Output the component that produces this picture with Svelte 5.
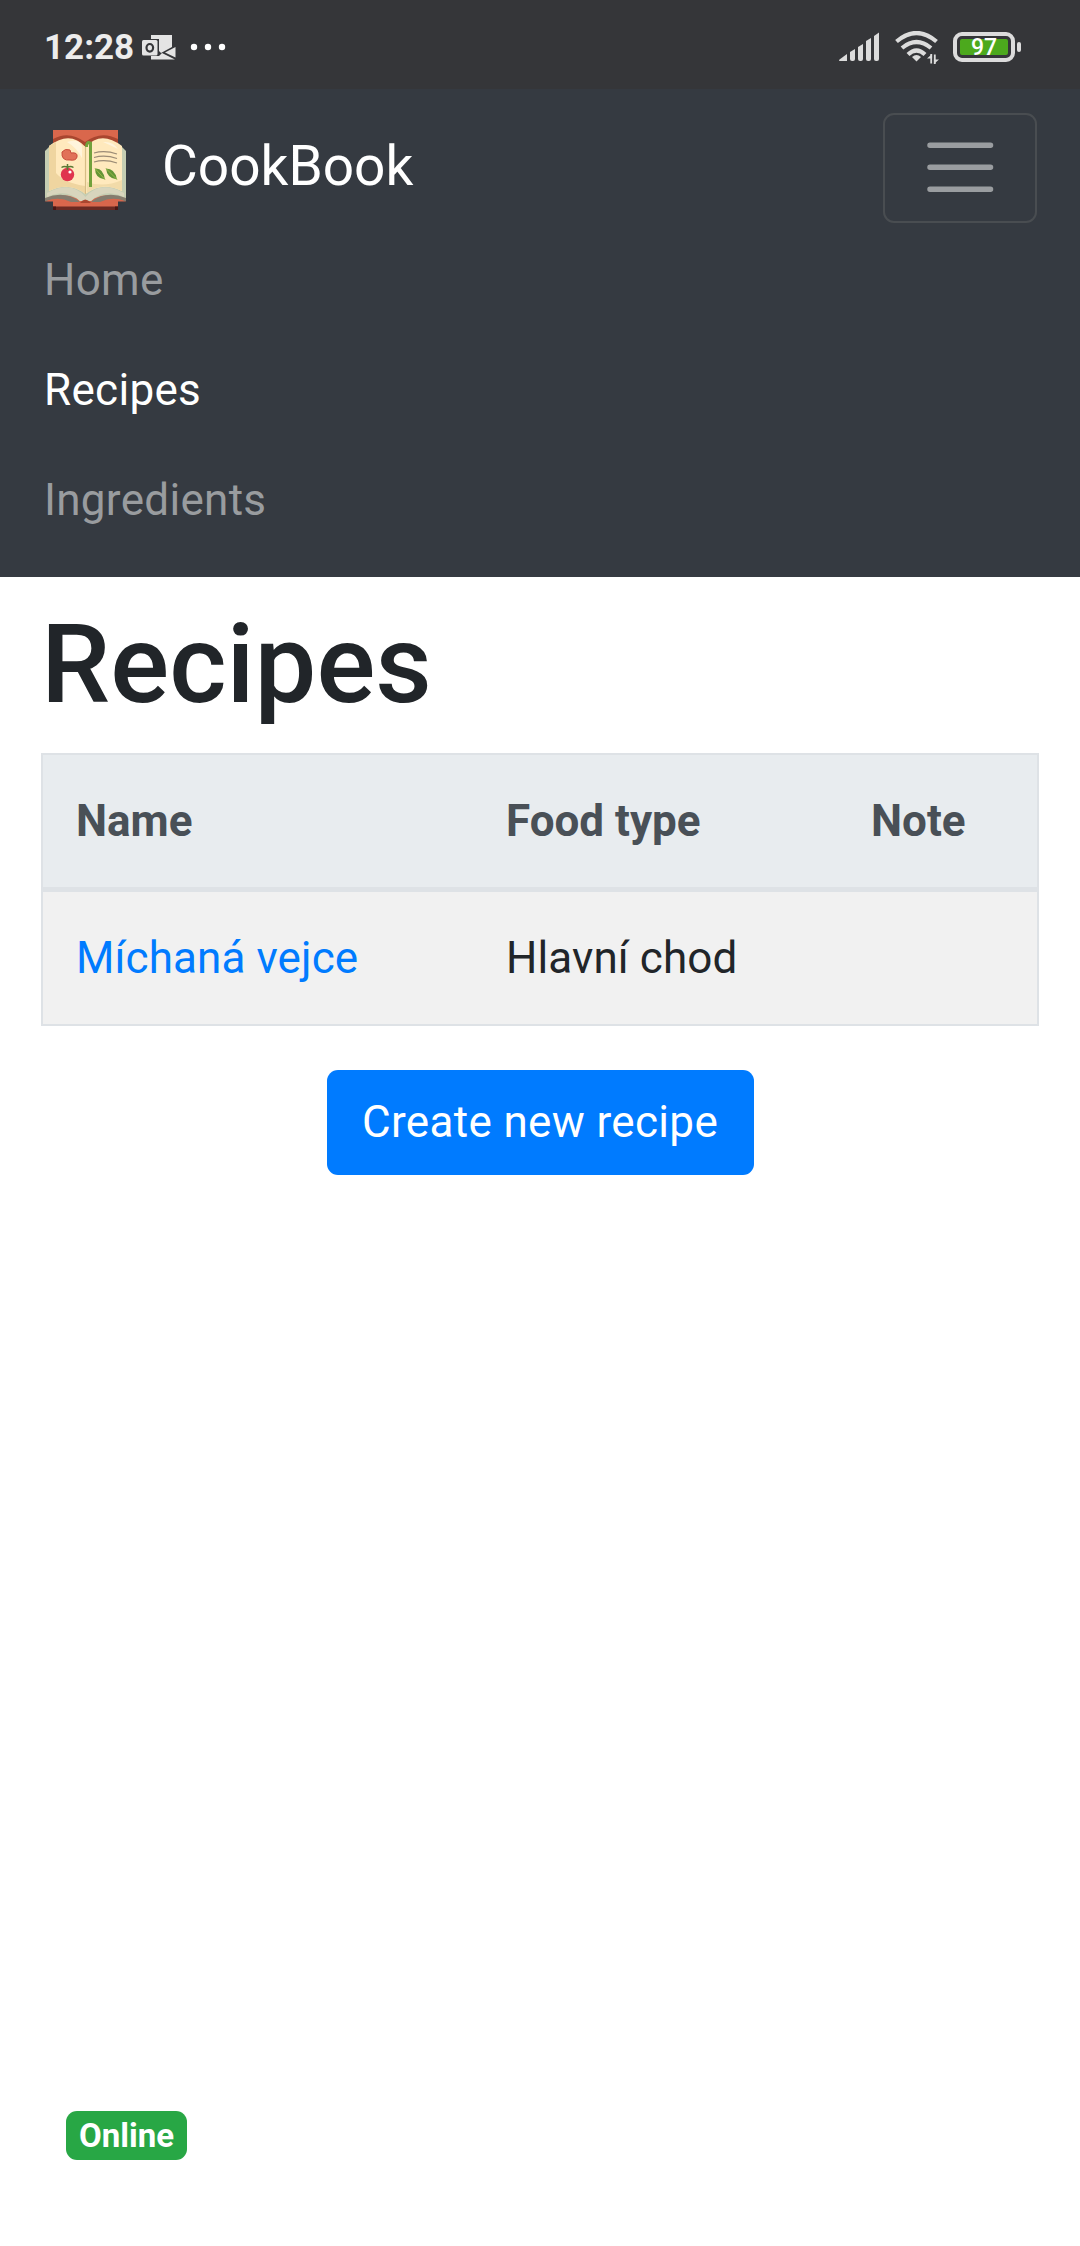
<script>
  const links = [
    { label: 'Home', active: false },
    { label: 'Recipes', active: true },
    { label: 'Ingredients', active: false }
  ];
  const recipes = [{ name: 'Míchaná vejce', type: 'Hlavní chod', note: '' }];
</script>

<div class="screen">
  <div class="status">
    <div class="side">
      <span class="time">12:28</span>
      <svg class="mail" width="34" height="27" viewBox="0 0 34 27">
        <path d="M9 1h21v12l-11 6-2-2V5H9z" fill="#e4e4e4" />
        <path d="M9 22h8l3-3 13 6.500H9z" fill="#e4e4e4" />
        <path d="M33.500 13v10.500L23 18.500z" fill="#e4e4e4" />
        <rect x="0" y="6" width="15.500" height="15.500" rx="1.500" fill="#e4e4e4" />
        <ellipse cx="7.800" cy="13.800" rx="3.300" ry="3.800" fill="none" stroke="#353639" stroke-width="2.200" />
      </svg>
      <svg class="dots" width="36" height="8" viewBox="0 0 36 8" fill="#fff">
        <circle cx="4" cy="4" r="3.200" /><circle cx="18" cy="4" r="3.200" /><circle cx="32" cy="4" r="3.200" />
      </svg>
    </div>
    <div class="side">
      <svg width="42" height="30" viewBox="0 0 42 30" fill="#dcdcdc">
        <path d="M1 29q-1.500 0-.5-1.500L8 22v7z" />
        <path d="M11 20l5-3v10q0 2-2 2h-1q-2 0-2-2z" />
        <path d="M19 15l5-3v15q0 2-2 2h-1q-2 0-2-2z" />
        <path d="M27 9l5-3v21q0 2-2 2h-1q-2 0-2-2z" />
        <path d="M35 4l5-3.500V27q0 2-2 2h-1q-2 0-2-2z" />
      </svg>
      <svg class="wifi" width="44" height="34" viewBox="0 0 44 34">
        <g fill="none" stroke="#dcdcdc" stroke-width="4.200">
          <path d="M1.500 10.500Q21.500-6.500 41.500 10.500" />
          <path d="M7 17Q21.500 5 36 17" />
          <path d="M13 23.500Q21.500 15.500 30 23.500" />
        </g>
        <path d="M17 26q4.500-4 9 0l-4.500 4.500z" fill="#dcdcdc" />
        <path d="M36.200 23v9.500M39.800 33v-9.500" stroke="#dcdcdc" stroke-width="1.800" />
        <path d="M32 27.500h5.100v-4.500zM44 28.500h-5.100v4.500z" fill="#dcdcdc" />
      </svg>
      <div class="battery"><div class="charge">97</div></div>
    </div>
  </div>

  <nav>
    <div class="bar">
      <div class="brand">
        <svg width="82" height="82" viewBox="0 0 82 82">
          <path d="M8 0h65v80H8z" fill="#d9674c" />
          <path d="M8 9Q24 0 40 12Q56 0 73 9v9H8z" fill="#a9462f" />
          <path d="M8 76.500h65v3.500H8z" fill="#6b2a22" />
          <path d="M8 76.500h3v3.500H8zM70 76.500h3v3.500h-3z" fill="#4a1613" />
          <path d="M0 21l5-5h71l5 5v50H0z" fill="#c5cdb2" />
          <path d="M0 71Q22 60 35 71v2H26zM81 71Q59 60 46 71v2h9z" fill="#d9674c" />
          <path d="M0 68Q20 60 35 72H26Q13 66 0 71.500zM81 68Q61 60 46 72h9Q68 66 81 71.500z" fill="#857c6e" />
          <path d="M0 71.500Q13 66 26 72.500H0zM81 71.500Q68 66 55 72.500H81z" fill="#d9674c" />
          <path d="M0 71.500h8v2H0zM73 71.500h8v2h-8z" fill="#353a41" />
          <path d="M2 63Q26 50 40.500 67Q55 50 79 63v4Q59 58 46 71H35Q22 58 2 67z" fill="#d8d5bd" />
          <path d="M4 16Q25 0 40.500 17V64Q24 51 4 61z" fill="#ffe9bd" />
          <path d="M40.500 17Q56 0 77 16V61Q57 51 40.500 64z" fill="#ffe9bd" />
          <path d="M4 16l7-4v31q8 10 29.500 13v8Q24 51 4 61z" fill="#efd5a0" />
          <path d="M42 52q17 6 35-2v11Q57 51 42 63z" fill="#f2dba9" />
          <path d="M22 12q12-4 15 4v12Q31 17 22 12zM58 12q10-1 15 7-8-4-15-7z" fill="#fff4dc" />
          <path d="M17 22q3-4 8-2l1 3q7-1 6 4-1 4-7 3-9 1-8-8z" fill="#e17158" stroke="#c84d3c" stroke-width="1" />
          <circle cx="22.500" cy="44.500" r="6.700" fill="#e0344e" />
          <circle cx="25" cy="42" r="1.600" fill="#fff" />
          <path d="M16.500 37.500q3-2 6 0 3-2 6 0M22.500 40v-6" fill="none" stroke="#5b7935" stroke-width="1.500" />
          <g fill="none" stroke="#9b8b75" stroke-width="1.200">
            <path d="M49 23q11-3 23 1M49 27.500q11-3 23 1M49 32q11-3 23 1" />
          </g>
          <path d="M50 38.500q8-1 10 11-10-1-10-11zM61 38.500q9 0 11 11-10-1-11-11z" fill="#649536" />
          <path d="M50 38.500l10 11M61 38.500l11 11" stroke="#97b947" />
          <path d="M40.500 16V64" stroke="#d6bd86" stroke-width="1.200" />
          <path d="M41.500 17q0-6 4-4V57" fill="none" stroke="#72a13c" stroke-width="3" />
          <path d="M35 73q5-7 11 0z" fill="#a9462f" />
        </svg>
        <span>CookBook</span>
      </div>
      <button class="toggler" aria-label="Toggle navigation">
        <svg width="82.500" height="82.500" viewBox="0 0 30 30">
          <path d="M4 7h22M4 15h22M4 23h22" stroke="#9a9da0" stroke-width="2" stroke-linecap="round" />
        </svg>
      </button>
    </div>
    <ul>
      {#each links as link}
        <li class:active={link.active}>{link.label}</li>
      {/each}
    </ul>
  </nav>

  <main>
    <h1>Recipes</h1>
    <table>
      <thead>
        <tr><th class="name">Name</th><th class="type">Food type</th><th>Note</th></tr>
      </thead>
      <tbody>
        {#each recipes as recipe}
          <tr><td class="link">{recipe.name}</td><td>{recipe.type}</td><td>{recipe.note}</td></tr>
        {/each}
      </tbody>
    </table>
    <button class="create">Create new recipe</button>
  </main>

  <footer><span class="badge">Online</span></footer>
</div>

<style>
  :global(body) { margin: 0; background: #fff; }
  .screen {
    display: flex;
    flex-direction: column;
    box-sizing: border-box;
    width: 1080px;
    height: 2246px;
    font: 400 44px/66px Roboto, sans-serif;
    color: #212529;
    background: #fff;
  }
  svg { display: block; flex: none; }
  button { font: inherit; margin: 0; box-sizing: border-box; }
  .status {
    display: flex;
    justify-content: space-between;
    align-items: center;
    box-sizing: border-box;
    height: 89px;
    padding: 5px 59px 0 44px;
    background: #353639;
  }
  .side { display: flex; align-items: center; }
  .time { width: 98px; font-size: 35px; line-height: 40px; font-weight: 700; color: #ececec; padding-top: 1px; }
  .dots { margin-left: 14px; }
  .wifi { margin: 2px 14px 0 14px; }
  .battery {
    position: relative;
    box-sizing: border-box;
    width: 62px;
    height: 30px;
    margin-right: 6px;
    padding: 3px;
    border: 4px solid #dcdcdc;
    border-radius: 9px;
  }
  .battery::after {
    content: '';
    position: absolute;
    right: -10px;
    top: 6px;
    width: 4px;
    height: 10px;
    border-radius: 2px;
    background: #dcdcdc;
  }
  .charge {
    height: 16px;
    border-radius: 2px;
    background: #4ca91d;
    color: #fff;
    font: 500 23px/18px Roboto, sans-serif;
    text-align: center;
  }
  nav {
    box-sizing: border-box;
    height: 488px;
    padding: 24px 43px 0 44px;
    background: #353a41;
  }
  .bar { display: flex; justify-content: space-between; align-items: center; height: 110px; }
  .brand { display: flex; align-items: center; gap: 35px; padding-left: 1px; color: #fff; font-size: 55px; }
  .brand span { margin-top: -4px; }
  .brand svg { margin-top: 6px; }
  .toggler {
    display: flex;
    align-items: center;
    justify-content: center;
    width: 154px;
    height: 110px;
    padding: 0 0 1px;
    border: 2px solid #494d51;
    border-radius: 11px;
    background: none;
  }
  ul { list-style: none; margin: 0; padding: 2px 0 0; }
  li { padding: 22px 0; color: #999c9f; letter-spacing: .3px; }
  li.active { color: #fff; }
  main { display: flex; flex-direction: column; align-items: center; padding: 0 41px; }
  h1 {
    align-self: stretch;
    margin: 22px 0;
    font-size: 110px;
    line-height: 132px;
    font-weight: 500;
  }
  table {
    width: 998px;
    box-sizing: border-box;
    border: 2px solid #dee2e6;
    border-spacing: 0;
    table-layout: fixed;
  }
  th, td { height: 132px; padding: 0 0 0 33px; text-align: left; box-sizing: border-box; }
  th { height: 137px; background: #e8ecef; color: #495057; font-weight: 700; border-bottom: 5px solid #dee2e6; }
  td { background: #f1f1f1; letter-spacing: .1px; }
  .name { width: 430px; }
  .type { width: 365px; }
  .link { color: #007bff; }
  .create {
    width: 427px;
    height: 105px;
    margin-top: 44px;
    padding: 0 0 1px;
    border: 0;
    border-radius: 11px;
    color: #fff;
    background: #007bff;
    letter-spacing: .35px;
  }
  footer { display: flex; margin-top: auto; padding: 0 66px 86px; }
  .badge {
    box-sizing: border-box;
    width: 121px;
    height: 49px;
    border-radius: 11px;
    background: #28a745;
    color: #fff;
    font-size: 33px;
    line-height: 49px;
    font-weight: 700;
    text-align: center;
  }
</style>
